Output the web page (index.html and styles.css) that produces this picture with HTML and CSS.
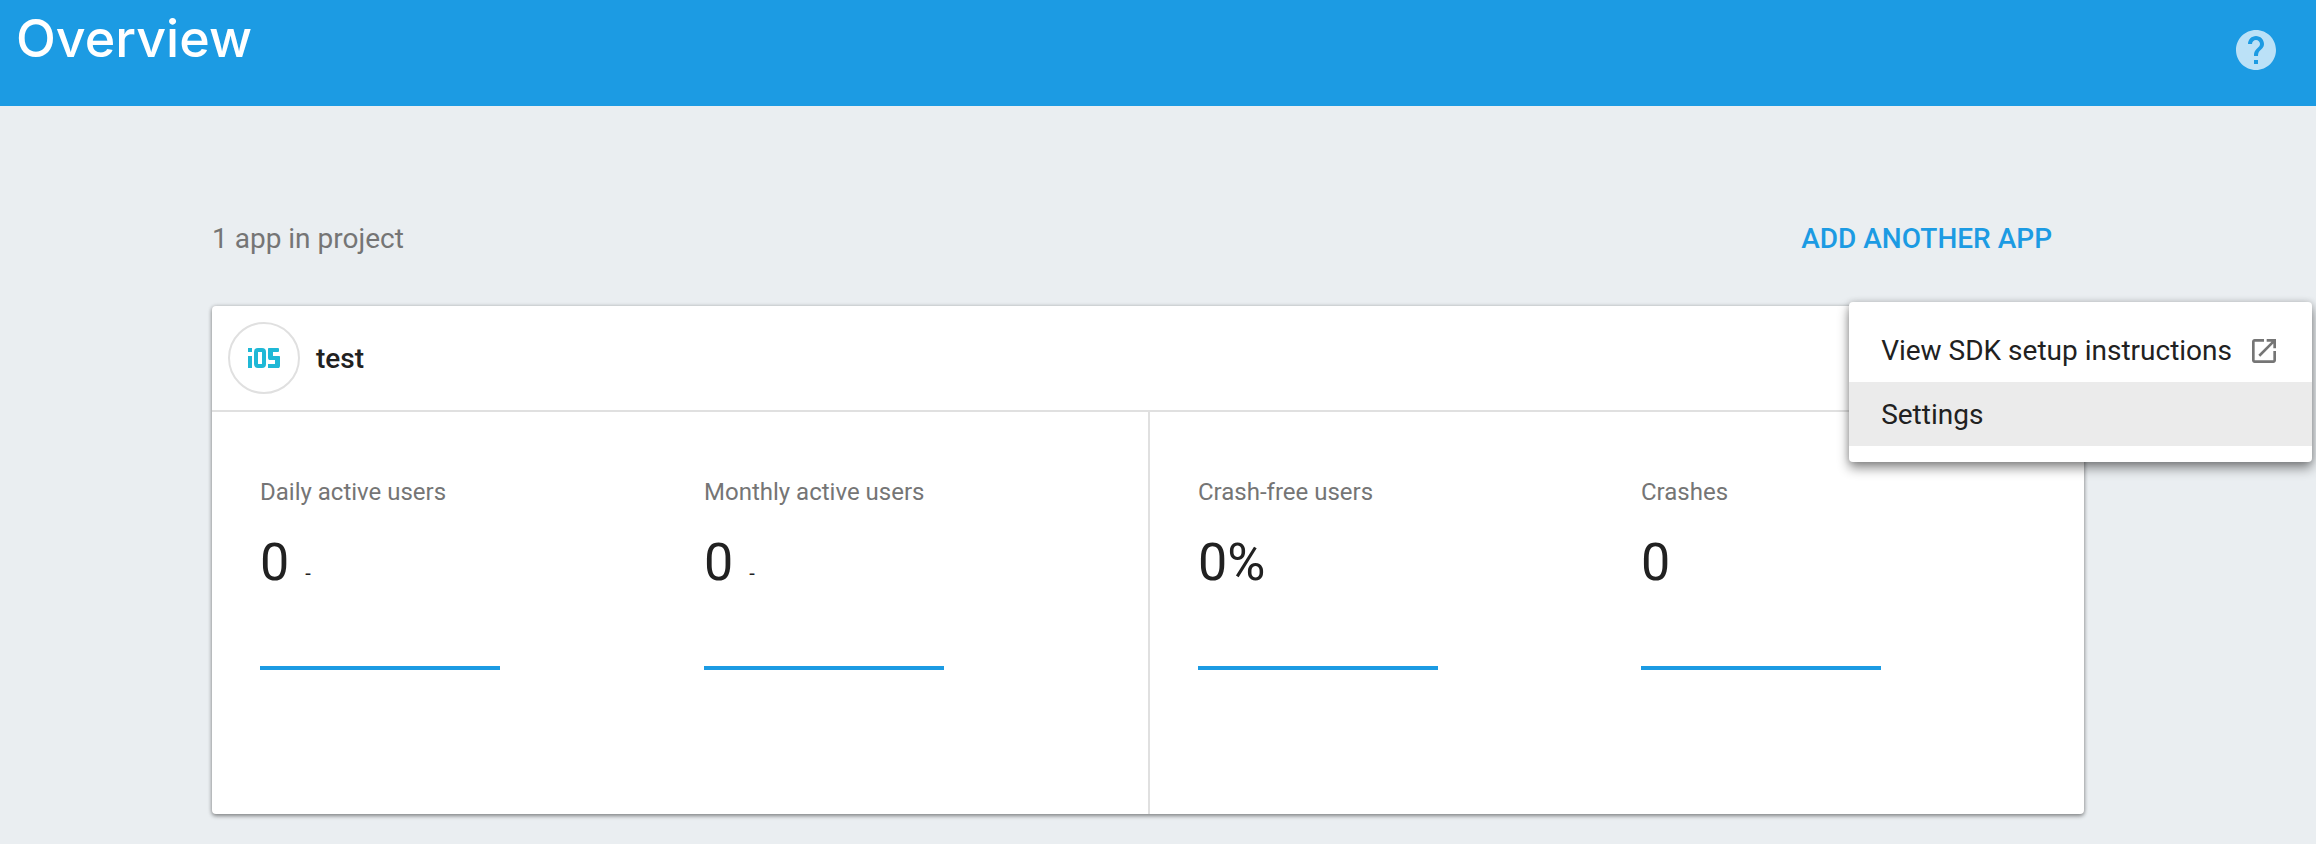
FILE: index.html
```html
<!DOCTYPE html>
<html lang="en">
<head>
<meta charset="utf-8">
<title>Overview</title>
<link rel="stylesheet" href="styles.css">
</head>
<body>
<header class="topbar">
  <h1 class="topbar-title">Overview</h1>
  <button class="help" type="button" aria-label="Help">
    <svg class="help-icon" viewBox="0 0 24 24" aria-hidden="true"><path d="M12 2C6.48 2 2 6.48 2 12s4.48 10 10 10 10-4.480 10-10S17.520 2 12 2zm1 17h-2v-2h2v2zm2.070-7.750l-.9.920C13.450 12.900 13 13.500 13 15h-2v-.5c0-1.100.45-2.100 1.170-2.830l1.240-1.260c.37-.36.59-.86.59-1.410 0-1.100-.9-2-2-2s-2 .9-2 2H8c0-2.210 1.790-4 4-4s4 1.790 4 4c0 .88-.36 1.680-.93 2.250z"/></svg>
  </button>
</header>
<main class="page">
  <div class="toolbar">
    <p class="app-count">1 app in project</p>
    <button class="add-app" type="button">ADD ANOTHER APP</button>
  </div>
  <section class="card">
    <header class="card-header">
      <span class="badge">
        <svg class="badge-logo" viewBox="0 0 32 20" role="img" aria-label="iOS">
          <rect x="0" y="0" width="4" height="4"/>
          <rect x="0" y="8" width="4" height="12"/>
          <rect class="ring" x="8" y="2" width="8" height="16" rx="2"/>
          <rect x="20" y="0" width="11" height="4" rx="1"/>
          <rect x="20" y="0" width="5" height="12" rx="2"/>
          <rect x="21" y="8" width="11" height="4" rx="1"/>
          <rect x="27" y="8" width="5" height="12" rx="2"/>
          <rect x="20" y="16" width="11" height="4"/>
        </svg>
      </span>
      <h2 class="app-name">test</h2>
    </header>
    <div class="panels">
      <div class="panel">
        <div class="metric">
          <h3 class="metric-label">Daily active users</h3>
          <p class="metric-value">0 <span class="metric-delta">-</span></p>
          <div class="sparkline"></div>
        </div>
        <div class="metric">
          <h3 class="metric-label">Monthly active users</h3>
          <p class="metric-value">0 <span class="metric-delta">-</span></p>
          <div class="sparkline"></div>
        </div>
      </div>
      <div class="panel">
        <div class="metric">
          <h3 class="metric-label">Crash-free users</h3>
          <p class="metric-value">0%</p>
          <div class="sparkline"></div>
        </div>
        <div class="metric">
          <h3 class="metric-label">Crashes</h3>
          <p class="metric-value">0</p>
          <div class="sparkline"></div>
        </div>
      </div>
    </div>
  </section>
  <div class="menu" role="menu">
    <a class="menu-item" role="menuitem" href="#sdk">
      View SDK setup instructions
      <svg class="menu-icon" viewBox="0 0 24 24" aria-hidden="true"><path d="M19 19H5V5h7V3H5c-1.110 0-2 .9-2 2v14c0 1.100.89 2 2 2h14c1.100 0 2-.9 2-2v-7h-2v7zM14 3v2h3.590l-9.830 9.830 1.410 1.410L19 6.410V10h2V3h-7z"/></svg>
    </a>
    <button class="menu-item menu-item-active" role="menuitem" type="button">Settings</button>
  </div>
</main>
</body>
</html>
```
FILE: styles.css
```css
* {
  box-sizing: border-box;
}

body {
  margin: 0;
  min-height: 100vh;
  background: #eaeef1;
  color: #212121;
  font-family: Roboto, "Liberation Sans", sans-serif;
  font-size: 28px;
  line-height: 33px;
}

h1, h2, h3, p {
  margin: 0;
}

button {
  border: 0;
  background: none;
  font: inherit;
  cursor: pointer;
}

.topbar {
  display: flex;
  justify-content: space-between;
  padding: 8px 36px 32px 16px;
  background: #1c9be3;
  color: #fff;
}

.topbar-title {
  font-family: Inter, sans-serif;
  font-size: 52px;
  font-weight: 500;
  line-height: 62px;
}

.help {
  align-self: flex-end;
  display: flex;
  padding: 18px 0 0;
}

.help-icon {
  width: 48px;
  height: 48px;
  fill: #bbe1f7;
}

.page {
  position: relative;
  padding: 88px 232px 30px 212px;
}

.toolbar {
  display: flex;
  justify-content: space-between;
  align-items: center;
  height: 89px;
  margin-bottom: 23px;
}

.app-count {
  color: #757575;
}

.add-app {
  padding: 20px 32px;
  color: #1c9be3;
  font-weight: 500;
}

.card {
  border-radius: 4px;
  background: #fff;
  box-shadow: 0 2px 4px rgba(0, 0, 0, 0.4), 0 0 4px rgba(0, 0, 0, 0.16);
}

.card-header {
  display: flex;
  align-items: center;
  gap: 16px;
  padding: 16px;
  border-bottom: 2px solid #e0e0e0;
}

.badge {
  display: flex;
  align-items: center;
  justify-content: center;
  width: 72px;
  height: 72px;
  border: 2px solid #e0e0e0;
  border-radius: 50%;
}

.badge-logo {
  width: 32px;
  height: 20px;
  fill: #1fb8d6;
}

.ring {
  fill: none;
  stroke: #1fb8d6;
  stroke-width: 4;
}

.app-name {
  font-size: 28px;
  font-weight: 500;
}

.panels {
  display: grid;
  grid-template-columns: 1fr 1fr;
}

.panel {
  display: grid;
  grid-template-columns: 1fr 1fr;
  gap: 48px;
  padding: 64px 48px 144px;
}

.panel + .panel {
  border-left: 2px solid #e0e0e0;
}

.metric-label {
  color: #757575;
  font-size: 24px;
  font-weight: 400;
  line-height: 32px;
}

.metric-value {
  display: flex;
  align-items: baseline;
  gap: 16px;
  margin: 24px 0 72px;
  font-size: 52px;
  line-height: 62px;
}

.metric-delta {
  font-size: 20px;
  line-height: 24px;
}

.sparkline {
  max-width: 240px;
  height: 4px;
  background: #1c9be3;
}

.menu {
  position: absolute;
  top: 196px;
  right: 4px;
  padding: 16px 0;
  border-radius: 4px;
  background: #fff;
  box-shadow: 0 6px 12px rgba(0, 0, 0, 0.45), 0 0 6px rgba(0, 0, 0, 0.16);
}

.menu-item {
  display: flex;
  align-items: center;
  gap: 16px;
  width: 100%;
  padding: 16px 32px 15px;
  color: #212121;
  text-decoration: none;
  white-space: nowrap;
}

.menu-item-active {
  background: #ebebeb;
}

.menu-icon {
  width: 32px;
  height: 32px;
  fill: #757575;
}
```
